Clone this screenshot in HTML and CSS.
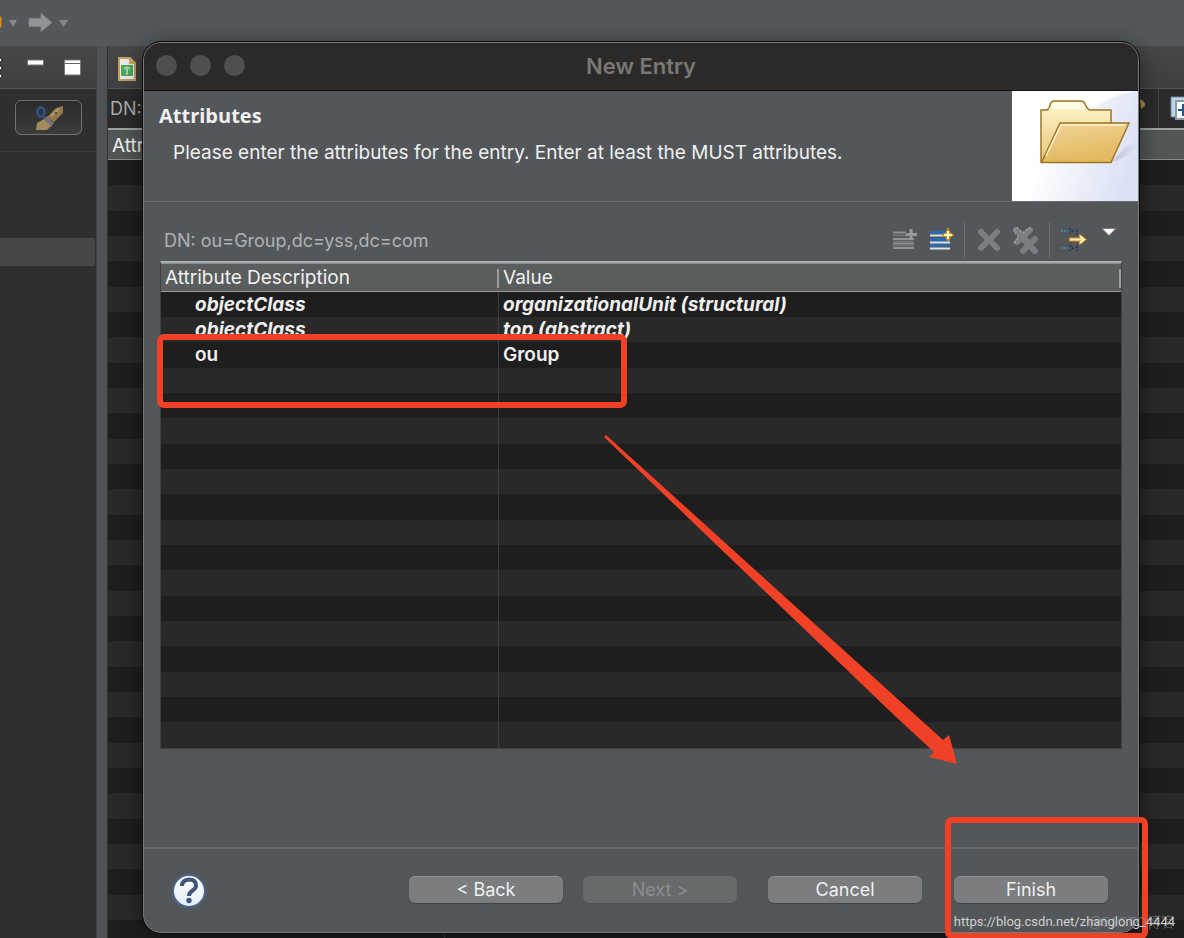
FILE: index.html
```html
<!DOCTYPE html>
<html lang="en">
<head>
<meta charset="utf-8">
<title>New Entry</title>
<link rel="stylesheet" href="styles.css">
</head>
<body>
<div class="workbench">
  <header class="main-toolbar">
    <svg width="72" height="24" viewBox="0 0 72 24" aria-hidden="true">
      <path d="M0 7h1v10h-1z" fill="#e08a12" stroke="#e08a12"/>
      <path d="M9 10h8l-4 7z" fill="#85888a"/>
      <path d="M30 8.500h11v-5l11 9-11 9v-5h-11q-1 0-1-1v-6q0-1 1-1z" fill="#929597" stroke="#7f8385"/>
      <path d="M59 10h9l-4.500 7z" fill="#85888a"/>
    </svg>
  </header>
  <div class="panes">
    <aside class="side">
      <div class="side-tabs">
        <svg width="97" height="42" viewBox="0 0 97 42" aria-hidden="true">
          <g fill="#fff" stroke="#111"><circle cx="0" cy="14" r="2"/><circle cx="0" cy="22" r="2"/><circle cx="0" cy="30" r="2"/></g>
          <path d="M27.500 14h16v5h-16z" fill="#fff" stroke="#777"/>
          <path d="M64.500 14h16v15h-16z" fill="#fff" stroke="#777"/><path d="M65 17.500h15" stroke="#666"/>
        </svg>
      </div>
      <div class="side-tools">
        <button class="brush-button" type="button" aria-label="Quick search">
          <svg width="30" height="28" viewBox="0 0 30 28" aria-hidden="true">
            <ellipse cx="7" cy="8" rx="3.500" ry="4.500" fill="none" stroke="#324f78" stroke-width="3"/><path d="M8 11l4 4" stroke="#324f78" stroke-width="3"/>
            <path d="M13 13l9-9 7-2v7l-9 9z" fill="#94784c"/><path d="M17 12l8-7" stroke="#b39b6c" stroke-width="2"/><circle cx="22" cy="9" r="1" fill="#334"/>
            <path d="M10 15l3-3 7 7-3 4z" fill="#77706f"/>
            <path d="M2 26l1-7 7-4 7 7-4 4z" fill="#a28b5c"/>
          </svg>
        </button>
      </div>
      <div class="side-body"><div class="side-selected"></div></div>
    </aside>
    <main class="editor">
      <div class="editor-tabs">
        <svg width="22" height="28" viewBox="0 0 22 28" aria-hidden="true">
          <path d="M3 3h11l5 5v17h-16z" fill="#e9eef2" stroke="#c4a25e" stroke-width="2"/>
          <path d="M13 3v6h6z" fill="#d8a958"/>
          <path d="M5 10h12v11h-12z" fill="#4fa95c"/><path d="M8 14q3-3 6 0M11 13v7" stroke="#a7d9a8" fill="none" stroke-width="2"/>
        </svg>
      </div>
      <div class="editor-dn">
        <span>DN:</span>
        <svg width="48" height="38" viewBox="0 0 48 38" aria-hidden="true">
          <path d="M4 10q6 3 5 7l-4 3z" fill="#ad8547"/>
          <path d="M22.500 0v38" stroke="#454545"/>
          <path d="M35 8h15v20h-15z" fill="#bfd5e8" stroke="#6f8193"/>
          <path d="M40 12h12v18h-12z" fill="#fff" stroke="#8798a9" stroke-width="2"/><path d="M42 21h8M47 15v12" stroke="#23548c" stroke-width="2"/>
        </svg>
      </div>
      <div class="editor-head">Attr</div>
      <div class="editor-rows"></div>
    </main>
  </div>

  <section class="dialog" role="dialog" aria-labelledby="dialog-title">
    <div class="titlebar">
      <div class="lights"><i></i><i></i><i></i></div>
      <h1 id="dialog-title">New Entry</h1>
    </div>
    <div class="banner">
      <div class="banner-text">
        <h2>Attributes</h2>
        <p>Please enter the attributes for the entry. Enter at least the MUST attributes.</p>
      </div>
      <svg class="banner-art" width="126" height="110" viewBox="0 0 126 110" aria-hidden="true">
        <defs>
          <linearGradient id="sky" x1="0.300" y1="0.300" x2="1" y2="0.500"><stop offset="0" stop-color="#fff"/><stop offset="1" stop-color="#dbe1f5"/></linearGradient>
          <linearGradient id="back" x1="0" y1="0" x2="0" y2="1"><stop offset="0" stop-color="#fff7d0"/><stop offset="1" stop-color="#e6c574"/></linearGradient>
          <linearGradient id="front" x1="0" y1="0" x2="0.300" y2="1"><stop offset="0" stop-color="#f2d59a"/><stop offset="1" stop-color="#e3b95e"/></linearGradient>
          <linearGradient id="shade" x1="0" y1="0" x2="1" y2="0"><stop offset="0" stop-color="#c9c4d3"/><stop offset="1" stop-color="#dbe1f5"/></linearGradient>
        </defs>
        <path d="M0 0h126v110h-126z" fill="#fff"/>
        <path d="M70 28Q92 4 126 0v110h-126l25-40z" fill="url(#sky)"/>
        <path d="M100 71l14-16q8-3 10 0-6 11-24 16z" fill="url(#shade)"/>
        <path d="M29 71v-52h5q3 0 4-5 1-4 4-4h27q3 0 5 5 2 4 4 4h21v52z" fill="url(#back)" stroke="#9c7626" stroke-width="1.500"/>
        <path d="M36 18q3-1 4-5 1-2 3-2h25q3 0 5 7z" fill="#fffbe6"/>
        <path d="M29.500 71.500l18.500-39.500h69l-18 39.500z" fill="url(#front)" stroke="#9c7626" stroke-width="1.500"/>
        <path d="M34 65l15-31h64" stroke="#fff3cf" stroke-width="1.500" fill="none"/>
      </svg>
    </div>
    <div class="content">
      <div class="entry-bar">
        <span class="entry-dn">DN: ou=Group,dc=yss,dc=com</span>
        <div class="tools">
          <button type="button" class="tool" aria-label="New value" disabled>
            <svg width="26" height="26" viewBox="0 0 26 26"><path d="M2 5.500h13M2 12h21M2 16.500h21M2 21h21" stroke="#8f9192" stroke-width="2"/><path d="M2 8.500h14M2 14.500h21M2 18.500h21" stroke="#707374" stroke-width="2"/><path d="M20 2v11M15 7.500h11" stroke="#97999a" stroke-width="3"/></svg>
          </button>
          <button type="button" class="tool" aria-label="New attribute">
            <svg width="26" height="26" viewBox="0 0 26 26"><path d="M2 5.500h20M2 12.500h20M2 18h20" stroke="#2c68b0" stroke-width="3"/><path d="M2 8.500h20M2 15.500h20M2 21.500h20" stroke="#d6e3ec" stroke-width="2"/><path d="M20 1l2 5 4 2-4 2-2 5-2-5-4-2 4-2z" fill="#c99522" stroke="#c99522"/><path d="M20 4v8M16 8h8" stroke="#fff4c2" stroke-width="2"/></svg>
          </button>
          <span class="rule"></span>
          <button type="button" class="tool" aria-label="Delete value" disabled>
            <svg width="26" height="26" viewBox="0 0 26 26"><path d="M5 5l16 16M21 5l-16 16" stroke="#7c7e7f" stroke-width="6" stroke-linecap="round"/></svg>
          </button>
          <button type="button" class="tool" aria-label="Delete all values" disabled>
            <svg width="28" height="28" viewBox="0 0 28 28"><path d="M4 4l12 12M18 4l-13 12" stroke="#7b7d7e" stroke-width="6" stroke-linecap="round"/><path d="M2 5l3-3 6 5 6-5 3 3M2 17l5-6-4-4" stroke="#999b9c" stroke-width="2" stroke-dasharray="2 2" fill="none"/><path d="M11 13l12 12M23 13l-12 12" stroke="#7b7d7e" stroke-width="6" stroke-linecap="round"/></svg>
          </button>
          <span class="rule"></span>
          <button type="button" class="tool" aria-label="Open default editor">
            <svg width="30" height="28" viewBox="0 0 30 28"><path d="M2 5h7M2 22h7" stroke="#477dac" stroke-width="2" stroke-dasharray="2 1"/><path d="M10 2l4 3-4 3M10 19l4 3-4 3M18 3v6M18 19v6" stroke="#303f55" stroke-width="2" fill="none" stroke-dasharray="3 1"/><path d="M10 11.500h10v-4l8 6-8 6v-4h-10z" fill="#d08c20"/><path d="M11 13.500h14M21 10l4 3.500-4 3.500" stroke="#fff0ba" stroke-width="2" fill="none"/></svg>
          </button>
          <button type="button" class="tool menu" aria-label="Menu">
            <svg width="18" height="10" viewBox="0 0 18 10"><path d="M2 1.500h14l-7 7z" fill="#fff" stroke="#80776f"/></svg>
          </button>
        </div>
      </div>
      <table class="attributes">
        <thead><tr><th scope="col">Attribute Description</th><th scope="col">Value</th></tr></thead>
        <tbody>
          <tr class="must"><td>objectClass</td><td>organizationalUnit (structural)</td></tr>
          <tr class="must"><td>objectClass</td><td>top (abstract)</td></tr>
          <tr><td>ou</td><td>Group</td></tr>
          <tr><td></td><td></td></tr><tr><td></td><td></td></tr><tr><td></td><td></td></tr>
          <tr><td></td><td></td></tr><tr><td></td><td></td></tr><tr><td></td><td></td></tr>
          <tr><td></td><td></td></tr><tr><td></td><td></td></tr><tr><td></td><td></td></tr>
          <tr><td></td><td></td></tr><tr><td></td><td></td></tr><tr><td></td><td></td></tr>
          <tr><td></td><td></td></tr><tr><td></td><td></td></tr><tr><td></td><td></td></tr>
        </tbody>
      </table>
    </div>
    <footer class="actions">
      <button type="button" class="help" aria-label="Help">
        <svg width="34" height="34" viewBox="0 0 34 34"><defs><linearGradient id="orb" x1="0" y1="0" x2="0" y2="1"><stop offset="0" stop-color="#fff"/><stop offset="1" stop-color="#e4edf5"/></linearGradient></defs><circle cx="17" cy="17" r="16" fill="url(#orb)" stroke="#4d648c" stroke-width="2"/><path d="M10 12q0-6 7-6.500 7 0 7 6 0 3-4 5.500-3 2-3 5" fill="none" stroke="#43567a" stroke-width="4"/><circle cx="17" cy="26.500" r="2.700" fill="#43567a"/></svg>
      </button>
      <div class="pair">
        <button type="button" class="push">&lt; Back</button>
        <button type="button" class="push" disabled>Next &gt;</button>
      </div>
      <div class="pair wide">
        <button type="button" class="push">Cancel</button>
        <button type="button" class="push">Finish</button>
      </div>
    </footer>
  </section>

  <svg class="marks" width="1184" height="938" viewBox="0 0 1184 938" aria-hidden="true">
    <g fill="none" stroke="#f04126" stroke-width="6">
      <rect x="160" y="337" width="464" height="68" rx="4"/>
      <rect x="948" y="820" width="197" height="116" rx="4"/>
    </g>
    <path d="M604 437l2-2 295 267 42 38 6-5 8 29-28-7 5-5-39-36z" fill="#f04126"/>
  </svg>
  <div class="credits">
    <span class="credit-host">@51CTO博客</span>
    <span class="credit-url">https://blog.csdn.net/zhanglong_4444</span>
  </div>
</div>
</body>
</html>
```
FILE: styles.css
```css
* { box-sizing: border-box; }
body {
  margin: 0;
  background: #53575a;
  color: #f0f0f0;
  font: 18px/24px Inter, "Noto Sans CJK SC", sans-serif;
}
h1, h2, p { margin: 0; }
button { font: inherit; color: inherit; border: 0; padding: 0; background: none; }
svg { display: block; }

.workbench {
  position: relative;
  display: flex;
  flex-direction: column;
  min-height: 100vh;
  overflow: hidden;
}
.main-toolbar { height: 46px; padding-top: 10px; background: #53585a; }
.panes { flex: 1; display: flex; gap: 10px; background: #4e5254; }

.side { width: 97px; display: flex; flex-direction: column; background: #2f2f2f; border-right: 1px solid #414447; }
.side-tabs { height: 43px; background: linear-gradient(#47474a, #404043); border-bottom: 1px solid #555; }
.side-tools { height: 63px; padding: 11px 14px 0 15px; border-bottom: 1px solid #383838; }
.brush-button {
  display: flex;
  justify-content: center;
  align-items: center;
  width: 67px;
  height: 35px;
  border: 1px solid #707070;
  border-radius: 6px;
  background: linear-gradient(#2a2a2a, #3c3c3c);
}
.side-body { flex: 1; padding: 86px 1px 0 0; }
.side-selected { height: 28px; background: #464646; }

.editor { flex: 1; display: flex; flex-direction: column; background: #1e1e1e; border-left: 1px solid #303234; }
.editor-tabs { height: 43px; padding: 9px 8px; background: linear-gradient(#47474a, #404043); border-bottom: 1px solid #555; }
.editor-dn { height: 39px; display: flex; justify-content: space-between; padding-left: 2px; line-height: 39px; background: #2b2b2b; color: #aaa; }
.editor-head { height: 32px; padding-left: 4px; font-size: 19px; line-height: 31px; background: #535657; border-top: 2px solid #a0a0a0; border-bottom: 1px solid #8b8b8b; }
.editor-rows {
  flex: 1;
  background:
    linear-gradient(#393939, #393939) 336px 0 / 1px 100% no-repeat,
    repeating-linear-gradient(#1e1e1e 0 25px, #292929 25px 51px, #1e1e1e 51px 76px, #292929 76px 101px, #1e1e1e 101px 127px, #292929 127px 152px);
}

.dialog {
  position: absolute;
  top: 42px;
  left: 143px;
  right: 45px;
  background: #53575a;
  border: 1px solid #777a7c;
  border-radius: 18px;
  overflow: hidden;
  outline: 1px solid #0c0c0c;
  box-shadow: 0 4px 24px rgba(0, 0, 0, 0.5);
}
.titlebar {
  display: grid;
  grid-template-columns: 1fr auto 1fr;
  align-items: center;
  height: 48px;
  padding: 0 12px 2px;
  background: #2b2a28;
  border-bottom: 1px solid #151515;
}
.titlebar h1 { font-size: 22px; line-height: 40px; font-weight: 600; color: #797876; }
.lights { display: flex; gap: 13px; }
.lights i { width: 21px; height: 21px; border-radius: 50%; background: #504f4d; }

.banner { display: flex; justify-content: space-between; border-bottom: 1px solid #696d6f; }
.banner-text { padding: 13px 0 0 15px; }
.banner-text h2 { font: 700 20px/24px "Open Sans", sans-serif; }
.banner-text p { padding: 13px 0 0 14px; font-size: 19px; }

.content { padding: 20px 16px 98px; }
.entry-bar { display: flex; justify-content: space-between; height: 39px; padding-left: 4px; }
.entry-dn { line-height: 37px; color: #b0b2b3; }
.tools { display: flex; padding-right: 1px; }
.tool { display: flex; height: 36px; align-items: center; justify-content: center; width: 37px; }
.tool.menu { align-items: flex-start; width: 24px; margin-left: 5px; padding-top: 5px; }
.rule { width: 1px; height: 36px; margin: 0 5px; background: #6c7072; }

.attributes { width: 100%; border-collapse: separate; border-spacing: 0; table-layout: fixed; border: 1px solid #3e4041; border-top: 2px solid #acacac; font-size: 19px; }
.attributes th {
  height: 29px;
  padding: 0 4px;
  background: linear-gradient(#9d9d9d, #9d9d9d) right 0 bottom 3px / 2px 19px no-repeat, #5a5d5e;
  border-top: 1px solid #898b8b;
  border-bottom: 1px solid #999;
  font-weight: 400;
  line-height: 26px;
  text-align: left;
}
.attributes th:first-child { width: 338px; }
.attributes td { height: 25px; padding: 0 4px; line-height: 24px; font-weight: 600; white-space: nowrap; background: #1e1e1e; }
.attributes td:first-child { padding-left: 34px; border-right: 1px solid #3d3d3d; }
.attributes tr:nth-child(3n) td { height: 26px; }
.attributes tr:nth-child(even) td { background: #292929; }
.attributes .must td { font-style: italic; font-weight: 700; }

.actions { display: flex; align-items: flex-start; padding: 25px 30px 24px 28px; border-top: 2px solid #64686a; }
.help { margin-right: auto; }
.pair { display: flex; gap: 20px; margin: 2px 0 0 31px; }
.pair.wide { gap: 32px; }
.push { width: 154px; height: 27px; border-radius: 6px; background: #7b7d7f; border-top: 1px solid #909293; box-shadow: 0 1px 1px #3f4244; }
.push:disabled { background: #666a6b; color: #8b8e8f; border-top-color: #6b6f70; box-shadow: 0 1px 1px #4c5052; }

.marks { position: absolute; top: 0; left: 0; pointer-events: none; }
.credits { position: absolute; right: 9px; bottom: 7px; display: grid; justify-items: end; font: 14px/18px "Liberation Sans", "Noto Sans CJK SC", sans-serif; }
.credits span { grid-area: 1 / 1; }
.credit-host { color: rgba(150, 150, 150, 0.5); }
.credit-url { font-family: Roboto, sans-serif; font-size: 13px; color: #d0d0d0; }
```
